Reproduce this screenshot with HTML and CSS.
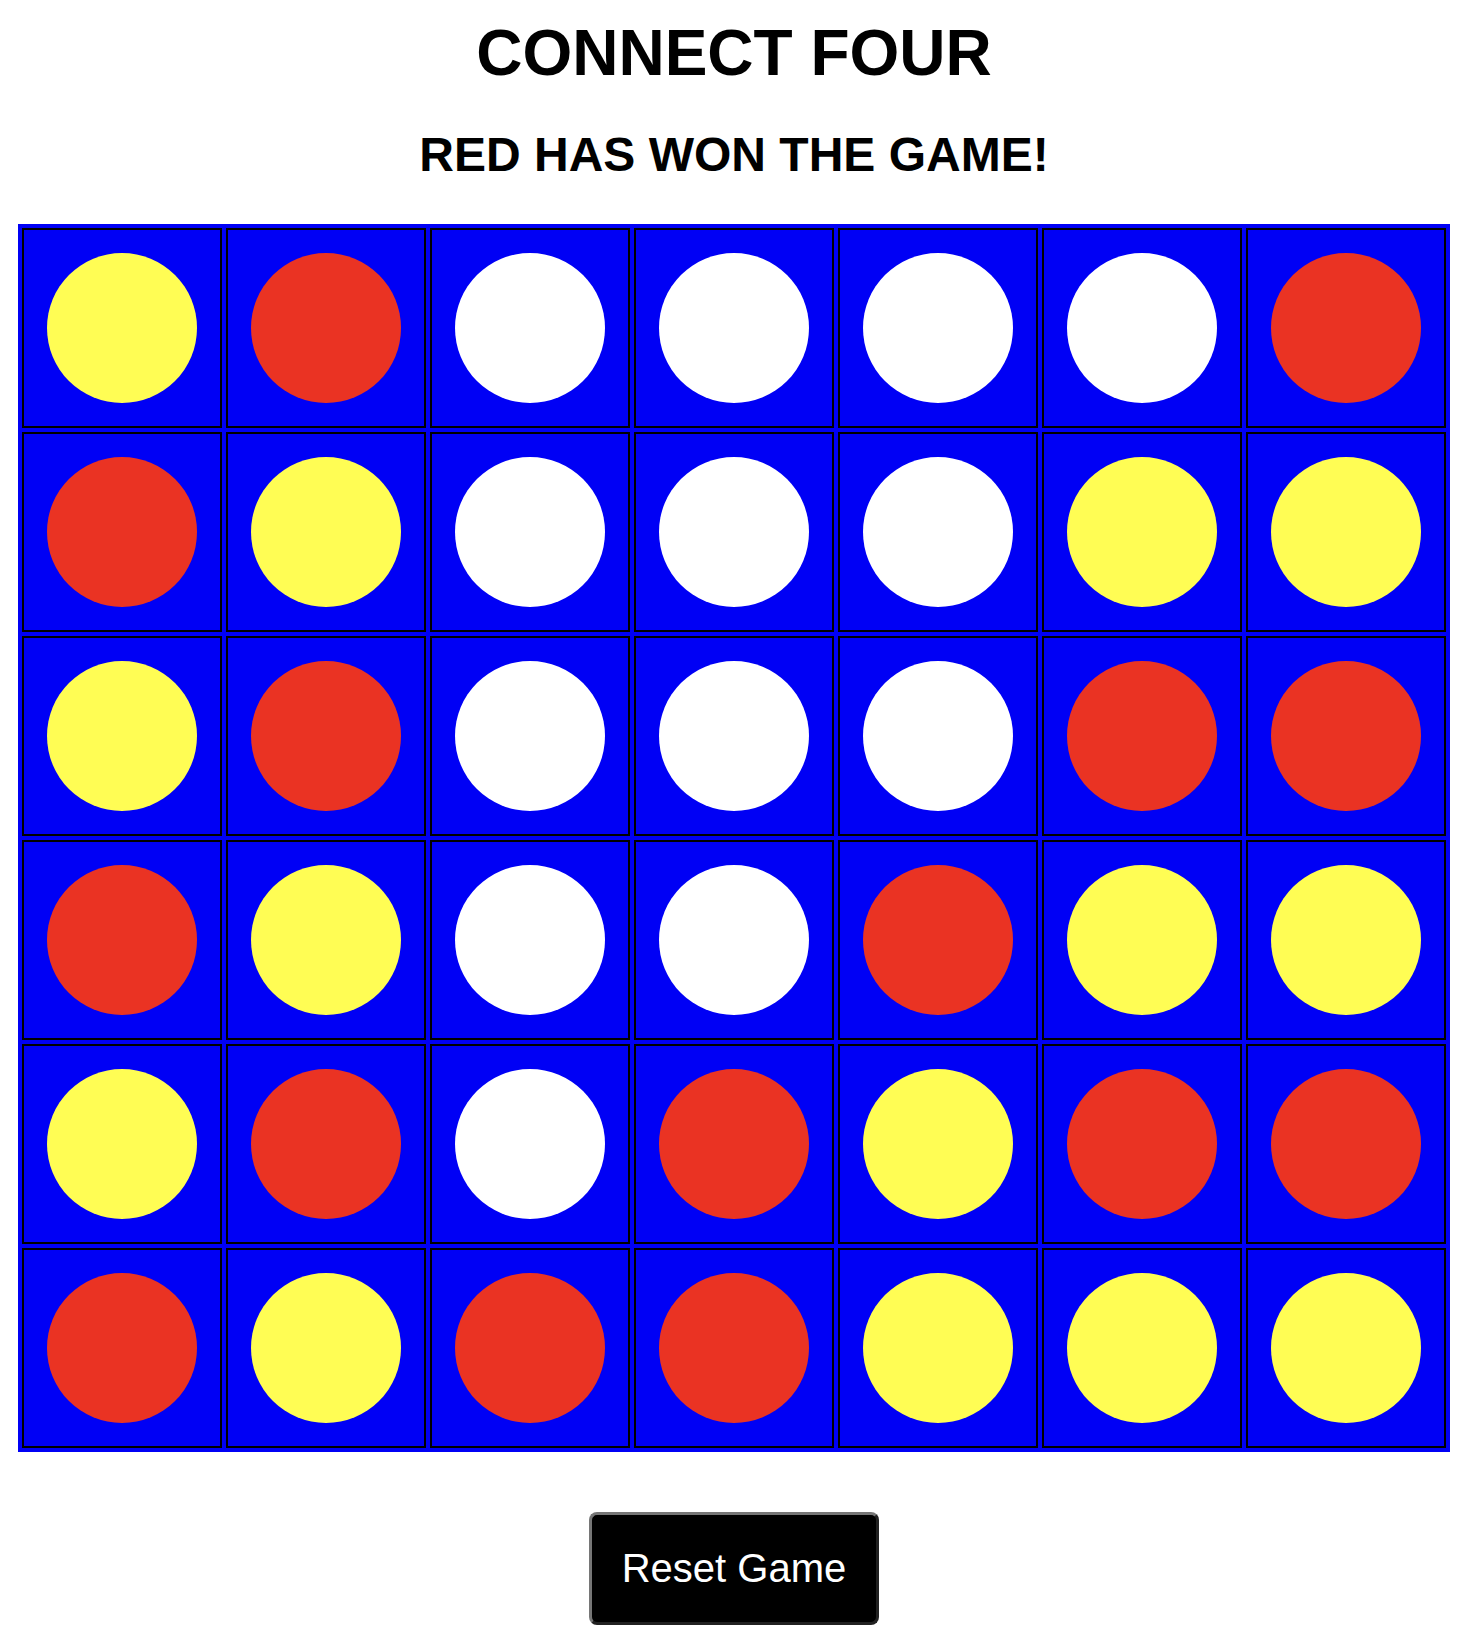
FILE: index.html
```html
<!DOCTYPE html>
<html lang="en">
<head>
<meta charset="utf-8">
<title>Connect Four</title>
<link rel="stylesheet" href="styles.css">
</head>
<body>
<main class="page">
  <h1 class="title">CONNECT FOUR</h1>
  <h2 class="status">RED HAS WON THE GAME!</h2>
  <div class="board">
    <div class="cell"><span class="disc yellow"></span></div>
    <div class="cell"><span class="disc red"></span></div>
    <div class="cell"><span class="disc empty"></span></div>
    <div class="cell"><span class="disc empty"></span></div>
    <div class="cell"><span class="disc empty"></span></div>
    <div class="cell"><span class="disc empty"></span></div>
    <div class="cell"><span class="disc red"></span></div>

    <div class="cell"><span class="disc red"></span></div>
    <div class="cell"><span class="disc yellow"></span></div>
    <div class="cell"><span class="disc empty"></span></div>
    <div class="cell"><span class="disc empty"></span></div>
    <div class="cell"><span class="disc empty"></span></div>
    <div class="cell"><span class="disc yellow"></span></div>
    <div class="cell"><span class="disc yellow"></span></div>

    <div class="cell"><span class="disc yellow"></span></div>
    <div class="cell"><span class="disc red"></span></div>
    <div class="cell"><span class="disc empty"></span></div>
    <div class="cell"><span class="disc empty"></span></div>
    <div class="cell"><span class="disc empty"></span></div>
    <div class="cell"><span class="disc red"></span></div>
    <div class="cell"><span class="disc red"></span></div>

    <div class="cell"><span class="disc red"></span></div>
    <div class="cell"><span class="disc yellow"></span></div>
    <div class="cell"><span class="disc empty"></span></div>
    <div class="cell"><span class="disc empty"></span></div>
    <div class="cell"><span class="disc red"></span></div>
    <div class="cell"><span class="disc yellow"></span></div>
    <div class="cell"><span class="disc yellow"></span></div>

    <div class="cell"><span class="disc yellow"></span></div>
    <div class="cell"><span class="disc red"></span></div>
    <div class="cell"><span class="disc empty"></span></div>
    <div class="cell"><span class="disc red"></span></div>
    <div class="cell"><span class="disc yellow"></span></div>
    <div class="cell"><span class="disc red"></span></div>
    <div class="cell"><span class="disc red"></span></div>

    <div class="cell"><span class="disc red"></span></div>
    <div class="cell"><span class="disc yellow"></span></div>
    <div class="cell"><span class="disc red"></span></div>
    <div class="cell"><span class="disc red"></span></div>
    <div class="cell"><span class="disc yellow"></span></div>
    <div class="cell"><span class="disc yellow"></span></div>
    <div class="cell"><span class="disc yellow"></span></div>
  </div>
  <button class="reset" type="button">Reset Game</button>
</main>
</body>
</html>
```

FILE: styles.css
```css
html, body {
  margin: 0;
  padding: 0;
  background: #ffffff;
}

body {
  font-family: "Liberation Sans", Arial, Helvetica, sans-serif;
  color: #000000;
}

.page {
  display: flex;
  flex-direction: column;
  align-items: center;
  padding: 16px 20px 14px 18px;
}

.title {
  margin: 0;
  font-size: 64px;
  font-weight: 700;
  line-height: normal;
}

.status {
  margin: 37px 0 0;
  font-size: 48px;
  font-weight: 700;
  line-height: normal;
}

.board {
  margin-top: 42px;
  display: grid;
  grid-template-columns: repeat(7, 200px);
  grid-auto-rows: 200px;
  gap: 4px;
  padding: 4px;
  background: #0000f5;
}

.cell {
  box-sizing: border-box;
  border: 2px solid #000000;
  background: #0000f5;
  display: flex;
  align-items: center;
  justify-content: center;
}

.disc {
  display: block;
  width: 150px;
  height: 150px;
  border-radius: 50%;
}

.disc.empty {
  background: #ffffff;
}

.disc.red {
  background: #ea3323;
}

.disc.yellow {
  background: #fffd54;
}

.reset {
  margin-top: 60px;
  padding: 31px 30px;
  font-family: "Liberation Sans", Arial, Helvetica, sans-serif;
  font-size: 40px;
  line-height: normal;
  color: #ffffff;
  background: #000000;
  border: 3px outset #767676;
  border-radius: 8px;
  cursor: pointer;
}
```
